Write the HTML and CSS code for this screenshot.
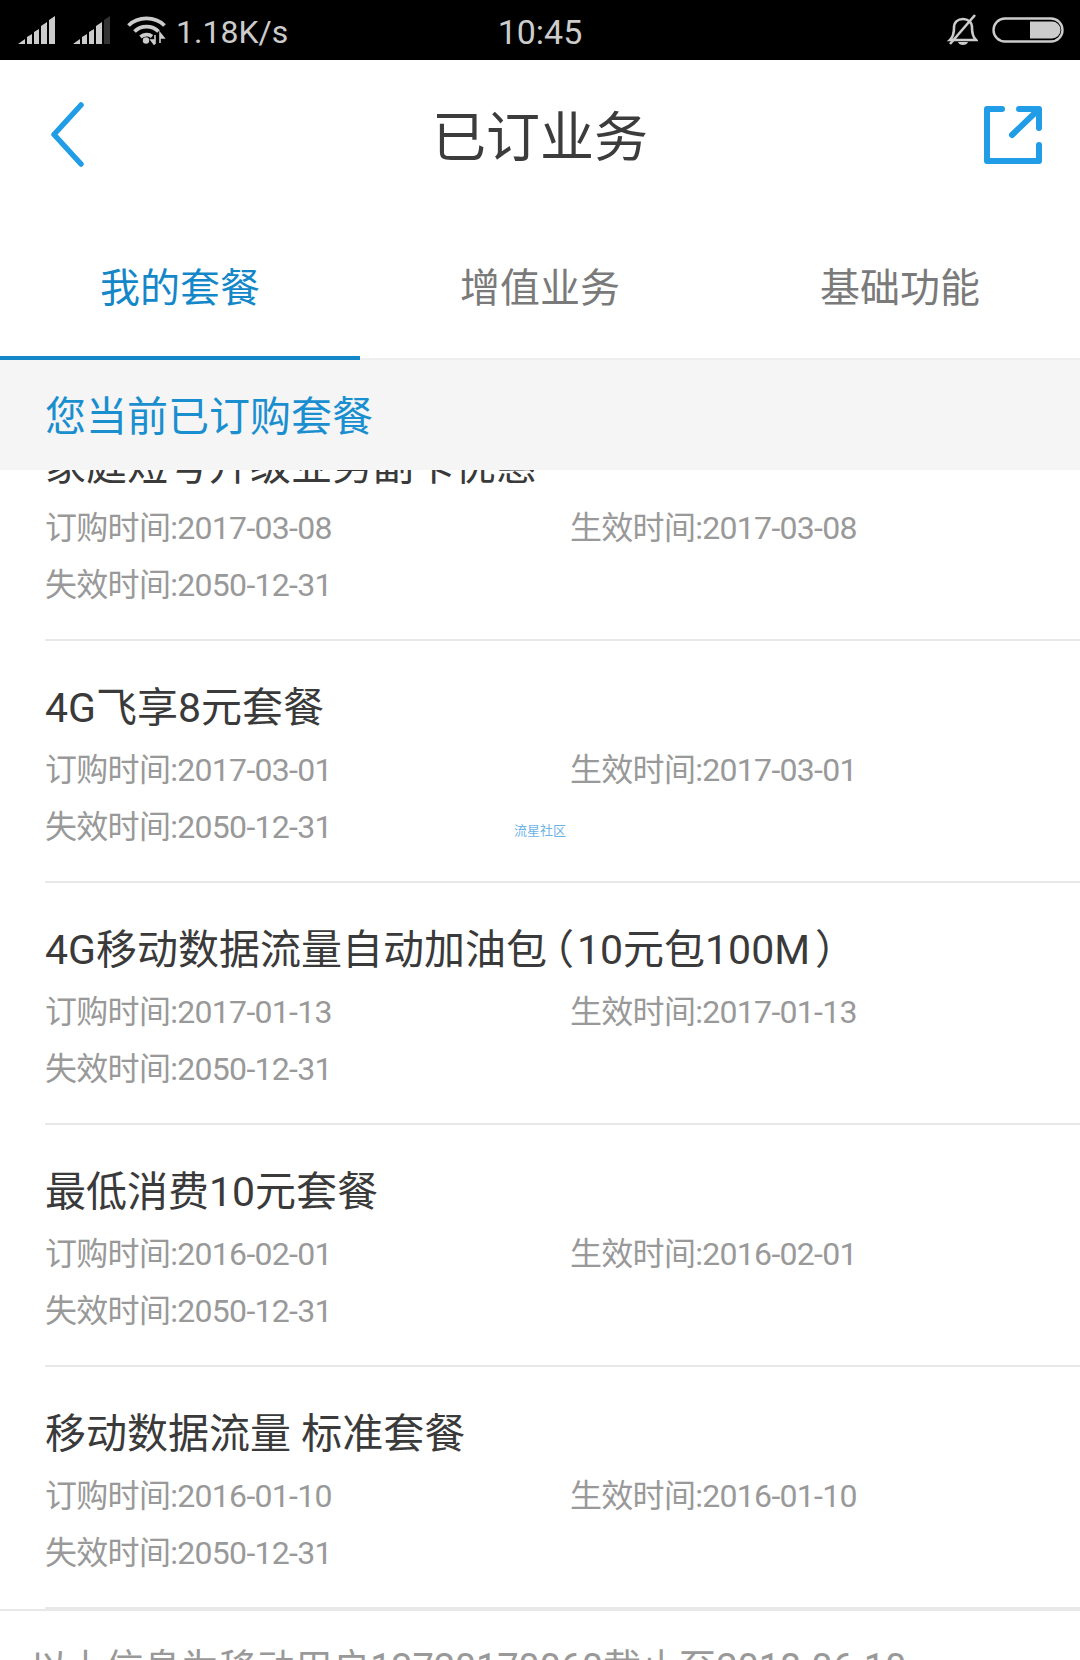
FILE: index.html
```html
<!DOCTYPE html>
<html lang="zh-CN">
<head>
<meta charset="utf-8">
<title>已订业务</title>
<link rel="stylesheet" href="styles.css">
</head>
<body>
<div class="screen">
  <div class="status">
    <div class="status-left">
      <svg class="sig" width="38" height="28" viewBox="0 0 38 28"><path class="on" d="M0 28l7-5v5zM9 21l5-3v10H9zM16 16l5-3v15h-5zM23 10l6-4v22h-6zM31 4l6-4v28h-6z"/></svg>
      <svg class="sig sig-last" width="38" height="28" viewBox="0 0 38 28"><path class="on" d="M0 28l7-5v5zM9 21l5-3v10H9zM16 16l5-3v15h-5zM23 10l6-4v22h-6z"/><path class="off" d="M31 4l6-4v28h-6z"/></svg>
      <svg class="wifi" width="40" height="30" viewBox="0 0 40 30"><g fill="none" stroke="#ccc" stroke-width="3.8"><path d="M1.500 10.500C11 1 28 1 37.500 10.500"/><path d="M7.500 16.500C14 10 25 10 31.500 16.500"/><path d="M13.500 22C17 19 22 19 25 21.500"/></g><circle cx="19" cy="25.500" r="3.200" fill="#ccc"/><path d="M28 20v9M27 25h-3l3 4zM33 18v10M33 18l4 5h-4z" stroke="#ccc" stroke-width="1.600" fill="#ccc"/></svg>
      <span class="speed">1.18K/s</span>
    </div>
    <span class="clock">10:45</span>
    <div class="status-right">
      <svg width="32" height="32" viewBox="0 0 32 32"><g fill="none" stroke="#ccc" stroke-width="2.600"><path d="M4 26c3-3 4-6 4-12 0-6 4-9 9-9s9 3 9 9c0 6 1 9 4 12z"/><path d="M4 30L29 1"/></g><path d="M12 28h10c-1 4-9 4-10 0z" fill="#ccc"/></svg>
      <svg width="72" height="26" viewBox="0 0 72 26"><rect x="1.500" y="1.500" width="69" height="23" rx="11.500" fill="none" stroke="#ccc" stroke-width="2.400"/><path d="M38 4.500h22a8.500 8.500 0 0 1 0 17H38z" fill="#ccc"/></svg>
    </div>
  </div>

  <header class="nav">
    <svg class="back" width="36" height="66" viewBox="0 0 36 66"><path d="M30 3L3 32.500 30 62" fill="none" stroke="#209de6" stroke-width="5.500" stroke-linecap="round" stroke-linejoin="round"/></svg>
    <h1 class="nav-title">已订业务</h1>
    <svg class="share" width="58" height="58" viewBox="0 0 58 58"><g fill="none" stroke="#209de6" stroke-width="6" stroke-linecap="round" stroke-linejoin="round"><path d="M18 3H3v52h52V39"/><path d="M28 29L54 4"/><path d="M35 3h20v19"/></g></svg>
  </header>

  <nav class="tabs">
    <div class="tab active">我的套餐</div>
    <div class="tab">增值业务</div>
    <div class="tab">基础功能</div>
  </nav>

  <div class="section">您当前已订购套餐</div>

  <div class="scroller">
    <div class="list">
      <article class="item">
        <h2 class="item-title">家庭短号升级业务副卡优惠</h2>
        <div class="dates"><span>订购时间:2017-03-08</span><span>生效时间:2017-03-08</span><span>失效时间:2050-12-31</span></div>
      </article>
      <article class="item">
        <h2 class="item-title">4G飞享8元套餐</h2>
        <div class="dates"><span>订购时间:2017-03-01</span><span>生效时间:2017-03-01</span><span>失效时间:2050-12-31</span></div>
      </article>
      <article class="item">
        <h2 class="item-title">4G移动数据流量自动加油包<span class="paren-open">（</span>10元包100M<span class="paren-close">）</span></h2>
        <div class="dates"><span>订购时间:2017-01-13</span><span>生效时间:2017-01-13</span><span>失效时间:2050-12-31</span></div>
      </article>
      <article class="item">
        <h2 class="item-title">最低消费10元套餐</h2>
        <div class="dates"><span>订购时间:2016-02-01</span><span>生效时间:2016-02-01</span><span>失效时间:2050-12-31</span></div>
      </article>
      <article class="item">
        <h2 class="item-title">移动数据流量 标准套餐</h2>
        <div class="dates"><span>订购时间:2016-01-10</span><span>生效时间:2016-01-10</span><span>失效时间:2050-12-31</span></div>
      </article>
    </div>
    <p class="footnote">以上信息为移动用户13720170060截止至2018-06-10</p>
  </div>

  <span class="watermark">流星社区</span>
</div>
</body>
</html>
```
FILE: styles.css
```css
html, body {
  margin: 0;
  padding: 0;
  background: #fff;
}
.screen {
  position: relative;
  width: 1080px;
  height: 1660px;
  overflow: hidden;
  display: flex;
  flex-direction: column;
  font-family: Roboto, "Noto Sans CJK SC", sans-serif;
}
.status {
  flex: none;
  height: 60px;
  background: #000;
  color: #ccc;
  display: grid;
  grid-template-columns: 1fr auto 1fr;
  align-items: center;
  padding: 0 16px;
  box-sizing: border-box;
}
.status-left {
  display: flex;
  align-items: center;
  padding-left: 2px;
}
.status-left .sig { margin-right: 17px; }
.status-left .sig-last { margin-right: 16px; }
.status-left .wifi { margin-right: 9px; }
.speed {
  font-size: 32px;
  line-height: 56px;
  padding-top: 3px;
}
.clock {
  font-size: 34px;
  line-height: 56px;
  padding-top: 3px;
}
.status-right {
  display: flex;
  justify-content: flex-end;
  align-items: center;
  gap: 14px;
}
.on { fill: #ccc; }
.off { fill: #333; }
.nav {
  flex: none;
  height: 150px;
  display: grid;
  grid-template-columns: 1fr auto 1fr;
  align-items: center;
  padding: 0 38px;
}
.back {
  justify-self: start;
  margin-left: 13px;
}
.share { justify-self: end; }
.nav-title {
  margin: 8px 0 0;
  font-size: 54px;
  font-weight: 400;
  color: #3c3c3c;
  line-height: 60px;
}
.tabs {
  flex: none;
  height: 150px;
  display: grid;
  grid-template-columns: repeat(3, 1fr);
  box-sizing: border-box;
  border-bottom: 2px solid #eee;
}
.tab {
  text-align: center;
  font-size: 40px;
  line-height: 50px;
  padding-top: 54px;
  color: #7a7a7a;
}
.tab.active {
  color: #1487c9;
  border-bottom: 4px solid #1487c9;
  margin-bottom: -2px;
}
.section {
  flex: none;
  height: 110px;
  box-sizing: border-box;
  padding: 4px 0 0 45px;
  background: #f5f5f5;
  color: #1a8fd0;
  font-size: 41px;
  line-height: 106px;
  position: relative;
  z-index: 1;
}
.scroller {
  flex: 1;
  min-height: 0;
  overflow: hidden;
}
.list {
  margin-top: -71px;
}
.item {
  margin-left: 45px;
  height: 242px;
  box-sizing: border-box;
  padding-top: 37px;
  border-bottom: 2px solid #e8e8e8;
}
.item-title {
  margin: 0 0 4px;
  font-size: 41px;
  font-weight: 400;
  color: #3a3a3a;
  line-height: 60px;
  white-space: nowrap;
}
.paren-open {
  margin: 0 3px 0 -14px;
}
.paren-close {
  margin-left: 5px;
}
.dates {
  display: grid;
  grid-template-columns: 525px 1fr;
  font-size: 32px;
  letter-spacing: -0.7px;
  line-height: 57px;
  color: #999;
}
.footnote {
  margin: 0;
  border-top: 2px solid #e8e8e8;
  padding: 32px 0 0 30px;
  font-size: 38px;
  letter-spacing: -0.2px;
  line-height: 50px;
  color: #999;
  white-space: nowrap;
}
.watermark {
  position: absolute;
  left: 514px;
  top: 822px;
  font-size: 13px;
  line-height: 17px;
  color: #6db3e6;
}
```
